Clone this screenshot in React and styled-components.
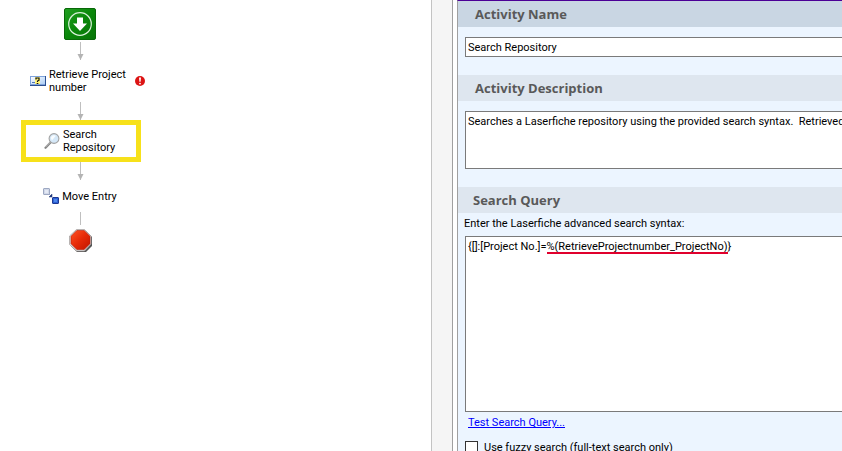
import React, { useState } from 'react';
import styled, { createGlobalStyle } from 'styled-components';

const GlobalStyle = createGlobalStyle`
  * {
    box-sizing: border-box;
  }

  body {
    margin: 0;
    background: #ffffff;
    color: #000000;
    font-family: Roboto, 'Liberation Sans', sans-serif;
    font-size: 11px;
    line-height: 13px;
  }
`;

const Designer = styled.div`
  display: grid;
  grid-template-columns: minmax(0, 432fr) 21px minmax(0, 389fr);
  height: 100vh;
  overflow: hidden;
`;

const Canvas = styled.main`
  border-right: 1px solid #c3c3c3;
  padding: 8px 0;
`;

const Flow = styled.div`
  display: flex;
  flex-direction: column;
  align-items: center;
  width: 160px;
`;

const Drawing = styled.svg`
  display: block;
  flex: none;
`;

const Step = styled.div`
  display: flex;
  align-items: center;
  gap: 3px;
  height: ${(props) => props.$height}px;
`;

const RetrieveStep = styled(Step)`
  align-self: stretch;
  padding-left: 30px;
`;

const SelectedStep = styled(Step)`
  align-self: flex-start;
  margin-left: 21px;
  width: 120px;
  border: 5px solid #f7e11a;
  padding-left: 18px;
`;

const StepLabel = styled.span`
  width: ${(props) => props.$width || 'auto'};
`;

const Gutter = styled.div`
  background: #f5f5f5;
  border-right: 1px solid #a0a0a0;
`;

const Panel = styled.aside`
  margin-left: 4px;
  border-left: 1px solid #a0a0a0;
  border-top: 1px solid #4b0096;
  background: #ecf5ff;
  overflow: hidden;
`;

const SectionTitle = styled.h2`
  margin: 0;
  padding-left: ${(props) => props.$indent || 17}px;
  background: ${(props) => (props.$active ? '#c9d6e3' : '#dee6ef')};
  color: #595959;
  font-family: 'Open Sans', 'Noto Sans', sans-serif;
  font-size: 13px;
  font-weight: 700;
  line-height: 26px;
`;

const SectionBody = styled.div`
  padding: ${(props) => props.$top}px 0 18px 7px;
`;

const fieldStyles = `
  display: block;
  width: 100%;
  margin: 0;
  border: 1px solid #7a7a7a;
  border-right: 0;
  border-radius: 0;
  padding: 2px;
  outline: none;
  background: #ffffff;
  color: #000000;
  font-family: Roboto, 'Liberation Sans', sans-serif;
  font-size: 11px;
  line-height: 14px;
`;

const TextInput = styled.input`
  ${fieldStyles}
  height: 20px;
`;

const TextArea = styled.textarea`
  ${fieldStyles}
  height: ${(props) => props.$height}px;
  padding-top: 3px;
  resize: none;
  overflow: hidden;
  white-space: ${(props) => (props.$nowrap ? 'pre' : 'pre-wrap')};
`;

const FieldLabel = styled.label`
  display: block;
  margin-left: -1px;
  padding-bottom: 6px;
`;

const QueryField = styled.div`
  position: relative;
`;

/* Mirrors the query so that tokens can be underlined above the textarea */
const TokenLayer = styled.div`
  position: absolute;
  inset: 0;
  padding: 3px;
  color: transparent;
  line-height: 14px;
  white-space: pre;
  pointer-events: none;
`;

const Token = styled.span`
  border-bottom: 2px solid #e0002d;
`;

const TestLink = styled.a`
  display: inline-block;
  margin: 4px 0 0 3px;
  color: #0000ff;
  text-decoration: underline;
`;

const CheckRow = styled.label`
  display: flex;
  align-items: center;
  gap: 6px;
  margin-top: 12px;
`;

const CheckBox = styled.input`
  appearance: none;
  width: 13px;
  height: 13px;
  margin: 0;
  border: 1px solid #333333;
  background: #ffffff;

  &:checked {
    background: #333333;
    box-shadow: inset 0 0 0 2px #ffffff;
  }
`;

const StartIcon = () => (
  <Drawing width="32" height="32" viewBox="0 0 32 32" role="img" aria-label="Start">
    <defs>
      <linearGradient id="start" x1="0" y1="0" x2="1" y2="1">
        <stop offset="0" stopColor="#22a022" />
        <stop offset="0.5" stopColor="#0a870a" />
        <stop offset="1" stopColor="#087408" />
      </linearGradient>
    </defs>
    <rect x="0.5" y="0.5" width="31" height="31" rx="1.5" fill="url(#start)" stroke="#086808" />
    <circle cx="16" cy="16" r="11.3" fill="none" stroke="#d9f0d9" strokeWidth="1.2" />
    <path d="M13 9.5h6v6h4L16 23l-7-7.5h4z" fill="#fff" />
  </Drawing>
);

const Connector = ({ before = 0, height, after = 0, arrow = true }) => (
  <Drawing width="8" height={before + height + after} viewBox={`0 ${-before} 8 ${before + height + after}`}>
    <path d={`M4.5 0V${height}`} stroke="#bfbfbf" />
    {arrow && <path d={`M1.5 ${height - 6}h6L4.5 ${height}z`} fill="#b4b4b4" />}
  </Drawing>
);

const TokenIcon = () => (
  <Drawing width="16" height="10" viewBox="0 0 16 10">
    <defs>
      <linearGradient id="token" x1="0" y1="0" x2="1" y2="1">
        <stop offset="0" stopColor="#ffffff" />
        <stop offset="1" stopColor="#a9ccf5" />
      </linearGradient>
    </defs>
    <rect x="0.5" y="0.5" width="15" height="8" fill="url(#token)" stroke="#7fa3dc" />
    <path d="M0 9.5h16M15.5 0v10" stroke="#2b4f91" />
    <path d="M5 1h5v7H5z" fill="#fff37a" />
    <path d="M2 6.5h3" stroke="#5177b5" />
    <path d="M6 3.5V2h3v2.2L7.5 5v1M6.7 7.5h1.6" fill="none" stroke="#111" strokeWidth="1.2" />
  </Drawing>
);

const ErrorIcon = () => (
  <Drawing width="10" height="10" viewBox="0 0 10 10" role="img" aria-label="Error">
    <circle cx="5" cy="5" r="5" fill="#dc1414" />
    <path d="M4 1.5h2L5.6 5.8H4.4z" fill="#fff" />
    <circle cx="5" cy="7.6" r="0.9" fill="#fff" />
  </Drawing>
);

const SearchIcon = () => (
  <Drawing width="16" height="16" viewBox="0 0 16 16">
    <path d="M7 9L1.5 14.8" stroke="#858585" strokeWidth="2.2" strokeLinecap="round" />
    <path d="M6.5 9L1.5 14" stroke="#cfcfcf" strokeWidth="0.8" />
    <circle cx="10" cy="5.5" r="4.9" fill="#d5e8f8" stroke="#a3a3a3" strokeWidth="1.1" />
    <path d="M6.8 5a3.2 3.2 0 0 1 5-2.2L8 7.5z" fill="#f8fcff" />
  </Drawing>
);

const MoveIcon = () => (
  <Drawing width="16" height="16" viewBox="0 0 16 16">
    <rect x="0.5" y="0.5" width="6" height="6" rx="0.5" fill="#d0d7e8" stroke="#9da8c2" />
    <rect x="2" y="2" width="3" height="3" fill="#e4e9f4" />
    <path d="M6.5 6.5L8 8M9 6v3H6z" fill="#233a7c" stroke="#233a7c" strokeWidth="0.5" />
    <rect x="9.5" y="9.5" width="6" height="6" rx="0.5" fill="#2c62d4" stroke="#1c3793" />
    <rect x="11" y="11" width="3" height="3" fill="#4f86ea" />
  </Drawing>
);

const StopIcon = () => (
  <Drawing width="24" height="24" viewBox="-1 0 24 24" role="img" aria-label="Stop">
    <defs>
      <linearGradient id="stop" x1="0" y1="0" x2="1" y2="1">
        <stop offset="0" stopColor="#ff5326" />
        <stop offset="0.5" stopColor="#e62a08" />
        <stop offset="1" stopColor="#c01500" />
      </linearGradient>
    </defs>
    <path d="M8 2h9l6 6v9l-6 6H8l-6-6V8z" fill="#555" />
    <path d="M7.5 0.5h8l6.5 6.5v8L15.5 22h-8L0.5 15.5V7z" fill="#ddd" stroke="#a09a98" strokeWidth="0.7" />
    <path d="M7.8 1.5h7.4l5.8 5.8v7.4L15.2 20.5H7.8L2 14.7V7.3z" fill="url(#stop)" stroke="#b81c08" strokeWidth="0.6" />
  </Drawing>
);

const App = () => {
  const [name, setName] = useState('Search Repository');
  const [description, setDescription] = useState(
    'Searches a Laserfiche repository using the provided search syntax.  Retrieved entries'
  );
  const [query, setQuery] = useState('{[]:[Project No.]=%(RetrieveProjectnumber_ProjectNo)}');
  const [fuzzy, setFuzzy] = useState(false);

  return (
    <>
      <GlobalStyle />
      <Designer>
        <Canvas>
          <Flow>
            <StartIcon />
            <Connector before={2} height={18} after={8} />
            <RetrieveStep $height={26}>
              <TokenIcon />
              <StepLabel $width="83px">Retrieve Project number</StepLabel>
              <ErrorIcon />
            </RetrieveStep>
            <Connector before={8} height={18} />
            <SelectedStep $height={42}>
              <SearchIcon />
              <StepLabel $width="60px">Search Repository</StepLabel>
            </SelectedStep>
            <Connector height={18} after={8} />
            <Step $height={16}>
              <MoveIcon />
              <StepLabel>Move Entry</StepLabel>
            </Step>
            <Connector before={8} height={13} after={4} arrow={false} />
            <StopIcon />
          </Flow>
        </Canvas>

        <Gutter />

        <Panel>
          <SectionTitle $active>Activity Name</SectionTitle>
          <SectionBody $top={10}>
            <TextInput
              aria-label="Activity Name"
              value={name}
              onChange={(e) => setName(e.target.value)}
            />
          </SectionBody>

          <SectionTitle>Activity Description</SectionTitle>
          <SectionBody $top={10}>
            <TextArea
              $height={58}
              $nowrap
              aria-label="Activity Description"
              value={description}
              onChange={(e) => setDescription(e.target.value)}
            />
          </SectionBody>

          <SectionTitle $indent={15}>Search Query</SectionTitle>
          <SectionBody $top={4}>
            <FieldLabel htmlFor="query">Enter the Laserfiche advanced search syntax:</FieldLabel>
            <QueryField>
              <TextArea
                $height={176}
                id="query"
                value={query}
                onChange={(e) => setQuery(e.target.value)}
              />
              <TokenLayer aria-hidden="true">
                {query.split(/(%\([^)]*\))/).map((part, index) =>
                  part.startsWith('%(') ? <Token key={index}>{part}</Token> : part
                )}
              </TokenLayer>
            </QueryField>
            <TestLink href="#test">Test Search Query...</TestLink>
            <CheckRow>
              <CheckBox
                type="checkbox"
                checked={fuzzy}
                onChange={(e) => setFuzzy(e.target.checked)}
              />
              Use fuzzy search (full-text search only)
            </CheckRow>
          </SectionBody>
        </Panel>
      </Designer>
    </>
  );
};

export default App;
